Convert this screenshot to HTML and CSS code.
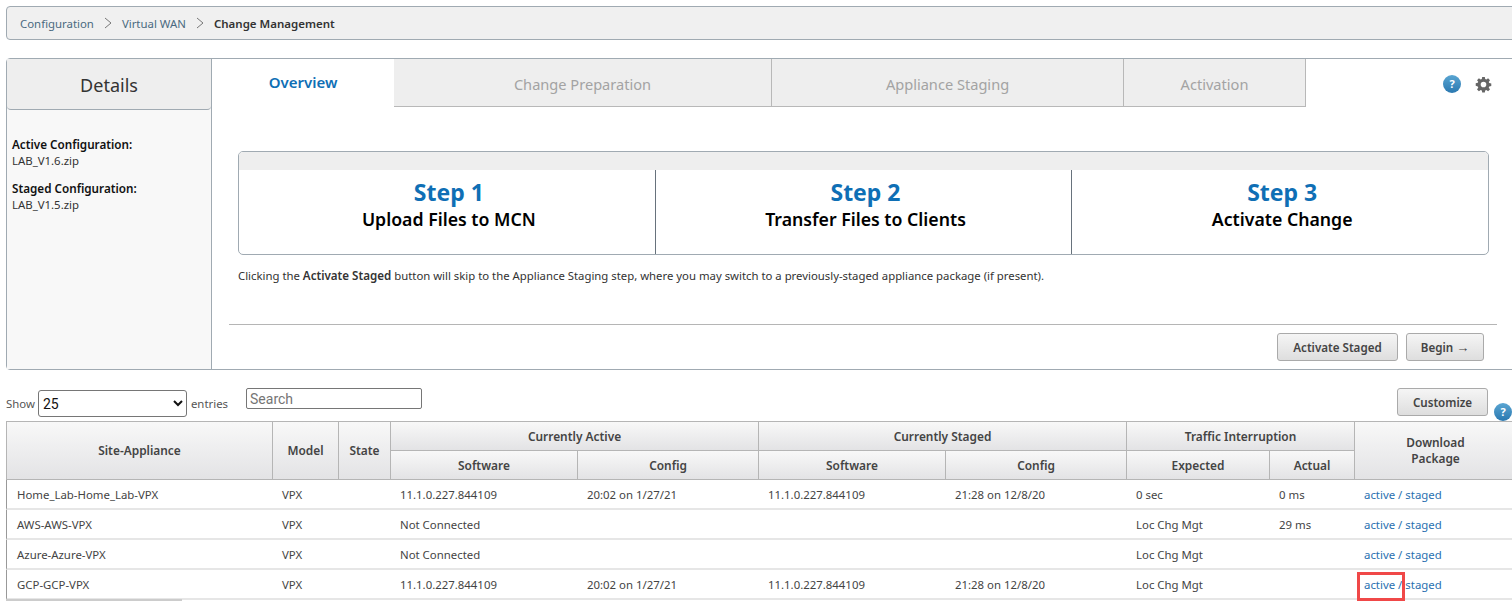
FILE: index.html
```html
<!DOCTYPE html>
<html lang="en">
<head>
  <meta charset="UTF-8">
  <meta name="viewport" content="width=device-width, initial-scale=1.0">
  <title>Change Management</title>
  <link rel="stylesheet" href="styles.css">
</head>
<body>
  <div class="page">
    <div class="crumbs">
      <a class="crumb">Configuration</a>
      <svg class="crumb-sep" viewBox="0 0 8 12"><path d="M1 1l6 5-6 5"/></svg>
      <a class="crumb">Virtual WAN</a>
      <svg class="crumb-sep" viewBox="0 0 8 12"><path d="M1 1l6 5-6 5"/></svg>
      <b class="crumb-current">Change Management</b>
    </div>

    <div class="panel">
      <div class="side">
        <div class="side-title">Details</div>
        <div class="side-info">
          <div class="side-label">Active Configuration:</div>
          <div class="side-value">LAB_V1.6.zip</div>
          <div class="side-label second">Staged Configuration:</div>
          <div class="side-value">LAB_V1.5.zip</div>
        </div>
      </div>
      <div class="main">
        <div class="tabs">
          <div class="tab tab-active">Overview</div>
          <div class="tab tab-prep">Change Preparation</div>
          <div class="tab tab-staging">Appliance Staging</div>
          <div class="tab tab-activation">Activation</div>
          <div class="tab-icons">
            <span class="help">?</span>
            <svg class="gear" viewBox="0 0 16 16"><path fill-rule="evenodd" d="M6.6 0h2.8l.4 2.2 1.2.5L12.900 1.400l2 2-1.300 1.900.5 1.200 2.200.4v2.800l-2.200.4-.5 1.200 1.300 1.900-2 2-1.900-1.300-1.200.5-.4 2.200H6.600l-.4-2.200-1.200-.5-1.900 1.300-2-2 1.300-1.900-.5-1.200L-.300 9.400V6.600l2.200-.4.5-1.200L1.100 3.400l2-2 1.900 1.300 1.200-.5zM8 5a3 3 0 1 0 0 6 3 3 0 0 0 0-6z"/></svg>
          </div>
        </div>
        <div class="steps">
          <div class="steps-strip"></div>
          <div class="steps-row">
            <div class="step"><div class="step-num">Step 1</div><div class="step-text">Upload Files to MCN</div></div>
            <div class="step"><div class="step-num">Step 2</div><div class="step-text">Transfer Files to Clients</div></div>
            <div class="step"><div class="step-num">Step 3</div><div class="step-text">Activate Change</div></div>
          </div>
        </div>
        <p class="note">Clicking the <b>Activate Staged</b> button will skip to the Appliance Staging step, where you may switch to a previously-staged appliance package (if present).</p>
        <div class="actions">
          <button class="btn btn-staged">Activate Staged</button>
          <button class="btn btn-begin">Begin <span class="arrow">→</span></button>
        </div>
      </div>
    </div>

    <div class="controls">
      <label class="show">Show
        <select class="show-select"><option>25</option></select>
        entries
      </label>
      <input class="search" type="text" placeholder="Search">
      <button class="btn btn-customize">Customize</button>
      <span class="help help-table">?</span>
    </div>

    <table class="grid">
      <colgroup>
        <col class="c-site"><col class="c-model"><col class="c-state">
        <col class="c-sw"><col class="c-cfg"><col class="c-sw2"><col class="c-cfg2">
        <col class="c-exp"><col class="c-act"><col class="c-dl">
      </colgroup>
      <thead>
        <tr>
          <th rowspan="2" class="th-tall">Site-Appliance</th>
          <th rowspan="2" class="th-tall">Model</th>
          <th rowspan="2" class="th-tall">State</th>
          <th colspan="2">Currently Active</th>
          <th colspan="2">Currently Staged</th>
          <th colspan="2">Traffic Interruption</th>
          <th rowspan="2" class="th-dl">Download<br>Package</th>
        </tr>
        <tr>
          <th>Software</th><th>Config</th><th>Software</th><th>Config</th><th>Expected</th><th>Actual</th>
        </tr>
      </thead>
      <tbody>
        <tr>
          <td>Home_Lab-Home_Lab-VPX</td><td>VPX</td><td></td>
          <td>11.1.0.227.844109</td><td>20:02 on 1/27/21</td><td>11.1.0.227.844109</td><td>21:28 on 12/8/20</td>
          <td>0 sec</td><td>0 ms</td>
          <td><a class="link">active</a> <span class="link">/</span> <a class="link">staged</a></td>
        </tr>
        <tr>
          <td>AWS-AWS-VPX</td><td>VPX</td><td></td>
          <td>Not Connected</td><td></td><td></td><td></td>
          <td>Loc Chg Mgt</td><td>29 ms</td>
          <td><a class="link">active</a> <span class="link">/</span> <a class="link">staged</a></td>
        </tr>
        <tr>
          <td>Azure-Azure-VPX</td><td>VPX</td><td></td>
          <td>Not Connected</td><td></td><td></td><td></td>
          <td>Loc Chg Mgt</td><td></td>
          <td><a class="link">active</a> <span class="link">/</span> <a class="link">staged</a></td>
        </tr>
        <tr>
          <td>GCP-GCP-VPX</td><td>VPX</td><td></td>
          <td>11.1.0.227.844109</td><td>20:02 on 1/27/21</td><td>11.1.0.227.844109</td><td>21:28 on 12/8/20</td>
          <td>Loc Chg Mgt</td><td></td>
          <td class="td-mark"><a class="link">active</a> <span class="link">/</span> <a class="link">staged</a><span class="mark"></span></td>
        </tr>
      </tbody>
    </table>
    <div class="scroll-thumb"></div>
  </div>
</body>
</html>
```

FILE: styles.css
```css
html, body {
  margin: 0;
  height: 601px;
  overflow: hidden;
  background: #fff;
}
body {
  font-family: "Noto Sans", "Open Sans", sans-serif;
  font-size: 11.4px;
  color: #333;
}
.page {
  width: 1512px;
  padding: 6px 0 0 6px;
  box-sizing: border-box;
}

/* breadcrumb */
.crumbs {
  display: flex;
  align-items: center;
  height: 34px;
  width: 1510px;
  box-sizing: border-box;
  padding-left: 13px;
  background: #f0f0f0;
  border: 1px solid #a0aab2;
  border-radius: 4px;
}
.crumb {
  color: #4a6a80;
}
.crumb-sep {
  width: 8px;
  height: 12px;
  margin: 0 10px 0 10px;
  fill: none;
  stroke: #777;
}
.crumb-current {
  color: #333;
  font-weight: 600;
  font-size: 11.500px;
}

/* details + tabs panel */
.panel {
  display: flex;
  width: 1510px;
  height: 312px;
  margin-top: 18px;
  box-sizing: border-box;
  border: 1px solid #a0aab2;
  border-radius: 4px;
  background: #fff;
}
.side {
  width: 204px;
  flex: none;
  background: #f8f8f8;
  border-right: 1px solid #a0aab2;
}
.side-title {
  height: 50px;
  line-height: 52px;
  text-align: center;
  font-size: 18px;
  background: #eee;
  border-bottom: 1px solid #a0aab2;
  border-radius: 0 0 4px 4px;
}
.side-info {
  padding: 26px 0 0 5px;
  line-height: 16px;
}
.side-label {
  font-size: 11.700px;
  font-weight: 600;
  color: #111;
}
.side-label.second {
  margin-top: 11px;
}
.side-value {
  margin-top: 1px;
}
.main {
  flex: 1;
}
.tabs {
  display: flex;
  height: 48px;
}
.tab {
  box-sizing: border-box;
  text-align: center;
  font-size: 14.600px;
  line-height: 51px;
  color: #a3a3a3;
  background: #eee;
  border: 1px solid #b8b8b8;
  border-top: 0;
  border-left: 0;
}
.tab-active {
  width: 182px;
  font-size: 15px;
  font-weight: 600;
  line-height: 46px;
  color: #0f6fb5;
  background: #fff;
  border: 0;
}
.tab-prep { width: 378px; }
.tab-staging { width: 352px; }
.tab-activation { width: 182px; }
.tab-icons {
  display: flex;
  align-items: center;
  gap: 15px;
  margin-left: 137px;
  height: 50px;
}
.help {
  display: block;
  width: 18px;
  height: 18px;
  border-radius: 50%;
  text-align: center;
  font-size: 11px;
  line-height: 18px;
  font-weight: 700;
  color: #fff;
  background: linear-gradient(#5aa5d2, #2a78b0);
}
.gear {
  width: 15px;
  height: 15px;
  fill: #666;
  overflow: visible;
}

/* steps */
.steps {
  width: 1251px;
  height: 104px;
  margin: 44px 0 0 26px;
  box-sizing: border-box;
  border: 1px solid #a0aab2;
  border-radius: 5px;
  overflow: hidden;
}
.steps-strip {
  height: 18px;
  background: #eee;
}
.steps-row {
  display: flex;
  height: 84px;
}
.step {
  flex: 1;
  padding-left: 4px;
  text-align: center;
  border-left: 1px solid #67727c;
}
.step:first-child {
  border-left: 0;
}
.step-num {
  margin-top: 4px;
  font-size: 23px;
  line-height: 36px;
  font-weight: 700;
  color: #0f6fb5;
}
.step-text {
  font-size: 17.700px;
  line-height: 18px;
  font-weight: 600;
  color: #000;
}
.note {
  margin: 13px 0 0 26px;
  font-size: 11.350px;
  line-height: 16px;
}
.note b {
  font-size: 11.600px;
  font-weight: 600;
}
.actions {
  display: flex;
  justify-content: flex-end;
  gap: 8px;
  width: 1268px;
  height: 36px;
  margin: 40px 0 0 17px;
  padding: 8px 13px 0 0;
  box-sizing: border-box;
  border-top: 1px solid #b5b5b5;
}
.btn {
  height: 28px;
  padding: 0;
  font: 600 11.600px "Noto Sans", "Open Sans", sans-serif;
  color: #444;
  background: linear-gradient(#f5f5f5, #dedede);
  border: 1px solid #aaa;
  border-radius: 3px;
}
.btn-staged { width: 121px; }
.btn-begin { width: 78px; }
.btn-customize { width: 91px; }
.arrow {
  font-family: "Liberation Sans", sans-serif;
  font-size: 13px;
  font-weight: 400;
}

/* table controls */
.controls {
  display: flex;
  align-items: flex-start;
  width: 1506px;
  height: 33px;
  margin-top: 18px;
  color: #555;
}
.show {
  display: flex;
  align-items: center;
  gap: 3px;
  margin-top: 2px;
}
.show-select {
  width: 149px;
  height: 27px;
  margin-right: 1px;
  font: 14px "Roboto", sans-serif;
  color: #111;
  background: #fff;
  border: 1px solid #767676;
  border-radius: 3px;
}
.search {
  width: 176px;
  height: 21px;
  margin-left: 18px;
  padding: 0 3px;
  box-sizing: border-box;
  font: 14px "Roboto", sans-serif;
  border: 1px solid #767676;
  border-radius: 2px;
}
.btn-customize {
  margin-left: auto;
}
.help-table {
  width: 18px;
  height: 18px;
  margin: 15px 0 0 6px;
}

/* table */
.grid {
  width: 1510px;
  table-layout: fixed;
  border-collapse: separate;
  border-spacing: 0;
  border-top: 1px solid #b5b5b5;
}
.c-site { width: 267px; }
.c-model { width: 66px; }
.c-state { width: 52px; }
.c-sw { width: 187px; }
.c-cfg { width: 181px; }
.c-sw2 { width: 187px; }
.c-cfg2 { width: 181px; }
.c-exp { width: 143px; }
.c-act { width: 85px; }
.c-dl { width: 161px; }
.grid th {
  height: 28px;
  padding: 0;
  font-size: 11.900px;
  font-weight: 600;
  color: #444;
  background: linear-gradient(#f8f8f8, #e3e3e5);
  border-right: 1px solid #b5b5b5;
  border-bottom: 1px solid #b5b5b5;
}
.grid th:first-child {
  border-left: 1px solid #b5b5b5;
}
.grid tr + tr th:first-child {
  border-left: 0;
}
.grid .th-dl {
  padding-bottom: 2px;
  line-height: 16px;
  border-right: 0;
}
.grid .th-tall {
  padding-bottom: 1px;
}
.grid td {
  height: 28px;
  padding: 0 0 0 9px;
  box-sizing: content-box;
  white-space: nowrap;
  color: #444;
  border-bottom: 2px solid #e6e6e6;
}
.grid td:first-child {
  padding-left: 10px;
  border-left: 1px solid #999;
}
.link {
  color: #2a70b0;
}
.td-mark {
  position: relative;
}
.mark {
  position: absolute;
  left: 2px;
  top: 2px;
  width: 48px;
  height: 29px;
  box-sizing: border-box;
  border: 3px solid #f04848;
}
.scroll-thumb {
  width: 176px;
  height: 2px;
  margin-top: -1px;
  background: #ccc;
}
```
